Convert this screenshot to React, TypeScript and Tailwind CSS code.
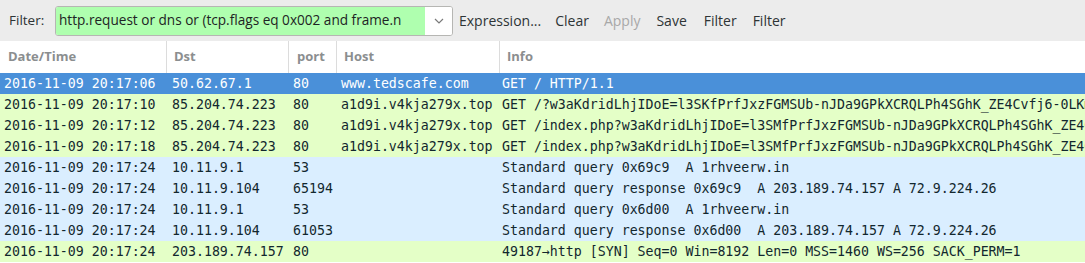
import React from "react";

type Row = { t: string; dst: string; port: string; host: string; info: string; kind: "sel" | "http" | "dns" };

const rows: Row[] = [
  { t: "2016-11-09 20:17:06", dst: "50.62.67.1", port: "80", host: "www.tedscafe.com", info: "GET / HTTP/1.1", kind: "sel" },
  { t: "2016-11-09 20:17:10", dst: "85.204.74.223", port: "80", host: "a1d9i.v4kja279x.top", info: "GET /?w3aKdridLhjIDoE=l3SKfPrfJxzFGMSUb-nJDa9GPkXCRQLPh4SGhK_ZE4Cvfj6-0LKmSbzvVXqbKm", kind: "http" },
  { t: "2016-11-09 20:17:12", dst: "85.204.74.223", port: "80", host: "a1d9i.v4kja279x.top", info: "GET /index.php?w3aKdridLhjIDoE=l3SMfPrfJxzFGMSUb-nJDa9GPkXCRQLPh4SGhK_ZE4Cvfj6-0LKm", kind: "http" },
  { t: "2016-11-09 20:17:18", dst: "85.204.74.223", port: "80", host: "a1d9i.v4kja279x.top", info: "GET /index.php?w3aKdridLhjIDoE=l3SMfPrfJxzFGMSUb-nJDa9GPkXCRQLPh4SGhK_ZE4Cvfj6-0LKm", kind: "http" },
  { t: "2016-11-09 20:17:24", dst: "10.11.9.1", port: "53", host: "", info: "Standard query 0x69c9  A 1rhveerw.in", kind: "dns" },
  { t: "2016-11-09 20:17:24", dst: "10.11.9.104", port: "65194", host: "", info: "Standard query response 0x69c9  A 203.189.74.157 A 72.9.224.26", kind: "dns" },
  { t: "2016-11-09 20:17:24", dst: "10.11.9.1", port: "53", host: "", info: "Standard query 0x6d00  A 1rhveerw.in", kind: "dns" },
  { t: "2016-11-09 20:17:24", dst: "10.11.9.104", port: "61053", host: "", info: "Standard query response 0x6d00  A 203.189.74.157 A 72.9.224.26", kind: "dns" },
  { t: "2016-11-09 20:17:24", dst: "203.189.74.157", port: "80", host: "", info: "49187\u2192http [SYN] Seq=0 Win=8192 Len=0 MSS=1460 WS=256 SACK_PERM=1", kind: "http" },
];

const rowCls: Record<Row["kind"], string> = {
  sel: "bg-[#4a90d9] text-white",
  http: "bg-[#e4ffc7] text-[#12272e]",
  dns: "bg-[#daeeff] text-[#12272e]",
};

export default function App() {
  return (
    <div className="w-[1085px] h-[263px] overflow-hidden bg-white" style={{ fontFamily: "'Open Sans', 'Noto Sans', sans-serif" }}>
      <div className="h-[41px] bg-[#ececec] flex items-center text-[#2e3436]">
        <span className="w-[55px] pl-[9px] text-[13.5px]">Filter:</span>
        <div className="flex h-[30px] w-[398px] rounded-[3px] border border-[#b6b6b3] overflow-hidden bg-white">
          <div className="w-[369px] bg-[#afffaf] flex items-center pl-[3px] whitespace-pre overflow-hidden text-[13.6px] text-[#1e2424]">
            http.request or dns or (tcp.flags eq 0x002 and frame.n
          </div>
          <div className="flex-1 flex items-center justify-center bg-white">
            <svg width="10" height="6" viewBox="0 0 10 6"><path d="M1 1 L5 5 L9 1" fill="none" stroke="#7a7a7a" strokeWidth="1.2" /></svg>
          </div>
        </div>
        <div className="flex items-center text-[14px]">
          <span className="ml-[6px]">Expression...</span>
          <span className="ml-[14px]">Clear</span>
          <span className="ml-[15px] text-[#a8a8a8]">Apply</span>
          <span className="ml-[16px]">Save</span>
          <span className="ml-[17px]">Filter</span>
          <span className="ml-[16px]">Filter</span>
        </div>
      </div>
      <div className="h-[32px] flex text-[13px] font-bold text-[#8b8e8f] bg-white">
        <div className="w-[167px] pl-[8px] flex items-center border-r border-[#dcdcdc]">Date/Time</div>
        <div className="w-[122px] pl-[7px] flex items-center border-r border-[#dcdcdc]">Dst</div>
        <div className="w-[48px] pl-[8px] flex items-center border-r border-[#dcdcdc]">port</div>
        <div className="w-[163px] pl-[7px] flex items-center border-r border-[#dcdcdc]">Host</div>
        <div className="flex-1 pl-[7px] flex items-center">Info</div>
      </div>
      <div style={{ fontFamily: "'DejaVu Sans Mono', monospace" }} className="text-[13.25px]">
        {rows.map((r, i) => (
          <div key={i} className={`h-[21px] flex items-center whitespace-pre ${rowCls[r.kind]}`}>
            <div className="w-[167px] pl-[4px] overflow-hidden">{r.t}</div>
            <div className="w-[122px] pl-[5px] overflow-hidden">{r.dst}</div>
            <div className="w-[48px] pl-[4px] overflow-hidden">{r.port}</div>
            <div className="w-[163px] pl-[4px] overflow-hidden">{r.host}</div>
            <div className="flex-1 pl-[2px] overflow-hidden">{r.info}</div>
          </div>
        ))}
      </div>
    </div>
  );
}
